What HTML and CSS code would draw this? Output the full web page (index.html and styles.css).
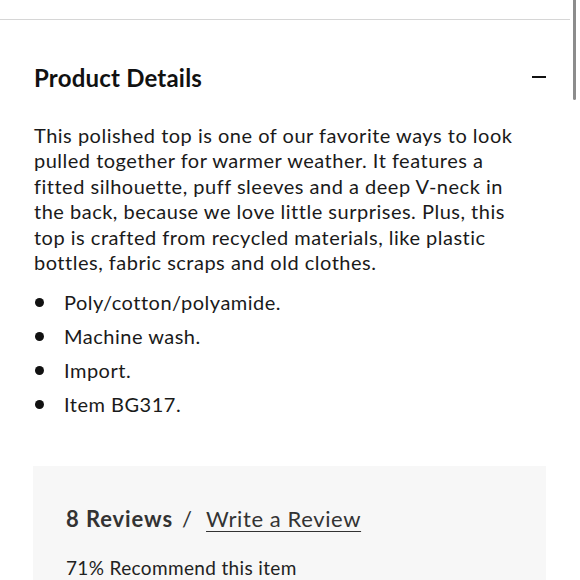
FILE: index.html
```html
<!DOCTYPE html>
<html>
<head>
<meta charset="utf-8">
<link rel="stylesheet" href="styles.css">
</head>
<body>
<div class="page">
  <div class="topline"></div>
  <section class="details">
    <div class="details-head">
      <h2 class="details-title">Product Details</h2>
      <span class="minus"></span>
    </div>
    <p class="desc">This polished top is one of our favorite ways to look pulled together for warmer weather. It features a fitted silhouette, puff sleeves and a deep V-neck in the back, because we love little surprises. Plus, this top is crafted from recycled materials, like plastic bottles, fabric scraps and old clothes.</p>
    <ul class="bullets">
      <li>Poly/cotton/polyamide.</li>
      <li>Machine wash.</li>
      <li>Import.</li>
      <li>Item BG317.</li>
    </ul>
  </section>
  <section class="reviews">
    <div class="reviews-head">
      <span class="count">8 Reviews</span>
      <span class="slash">/</span>
      <a class="write" href="#">Write a Review</a>
    </div>
    <div class="recommend">71% Recommend this item</div>
  </section>
</div>
<div class="scrollthumb"></div>
</body>
</html>
```
FILE: styles.css
```css
html, body {
  margin: 0;
  padding: 0;
  background: #fff;
  overflow: hidden;
}
body {
  font-family: Lato, "Open Sans", sans-serif;
  color: #1a1a1a;
  width: 580px;
  height: 580px;
}
.page {
  padding-top: 19px;
}
.topline {
  height: 1px;
  background: #d6d6d6;
  width: 570px;
}
.details {
  padding: 0 34px;
}
.details-head {
  display: flex;
  align-items: center;
  justify-content: space-between;
  padding-top: 44px;
  height: 26px;
}
.details-title {
  margin: 0;
  font-size: 24px;
  font-weight: 700;
  color: #111;
  letter-spacing: 0.2px;
}
.minus {
  width: 14px;
  height: 2px;
  background: #111;
}
.desc {
  margin: 33px 0 0;
  max-width: 486px;
  font-size: 20px;
  line-height: 25.4px;
  letter-spacing: 0.5px;
}
.bullets {
  margin: 16px 0 0;
  padding: 0;
  list-style: none;
}
.bullets li {
  display: flex;
  align-items: center;
  font-size: 20px;
  line-height: 22px;
  margin-bottom: 12px;
  letter-spacing: 0.5px;
}
.bullets li::before {
  content: "";
  width: 9px;
  height: 9px;
  border-radius: 50%;
  background: #111;
  margin-left: 1px;
  margin-right: 20px;
}
.reviews {
  margin: 51px 34px 0 33px;
  background: #f7f7f7;
  padding: 39px 33px 40px;
  width: 447px;
}
.reviews-head {
  display: flex;
  align-items: baseline;
  font-size: 22px;
  color: #333;
}
.count {
  font-weight: 700;
  letter-spacing: 0.9px;
}
.slash {
  margin: 0 14px 0 9px;
}
.write {
  color: #333;
  letter-spacing: 0.6px;
  text-decoration: underline;
  text-underline-offset: 4px;
  text-decoration-thickness: 1px;
}
.recommend {
  margin-top: 24px;
  font-size: 19px;
  letter-spacing: 0.35px;
  color: #222;
}
.scrollthumb {
  position: absolute;
  right: 4px;
  top: 0;
  width: 3px;
  height: 100px;
  background: #8c8c8c;
  border-radius: 0 0 2px 2px;
}
```
